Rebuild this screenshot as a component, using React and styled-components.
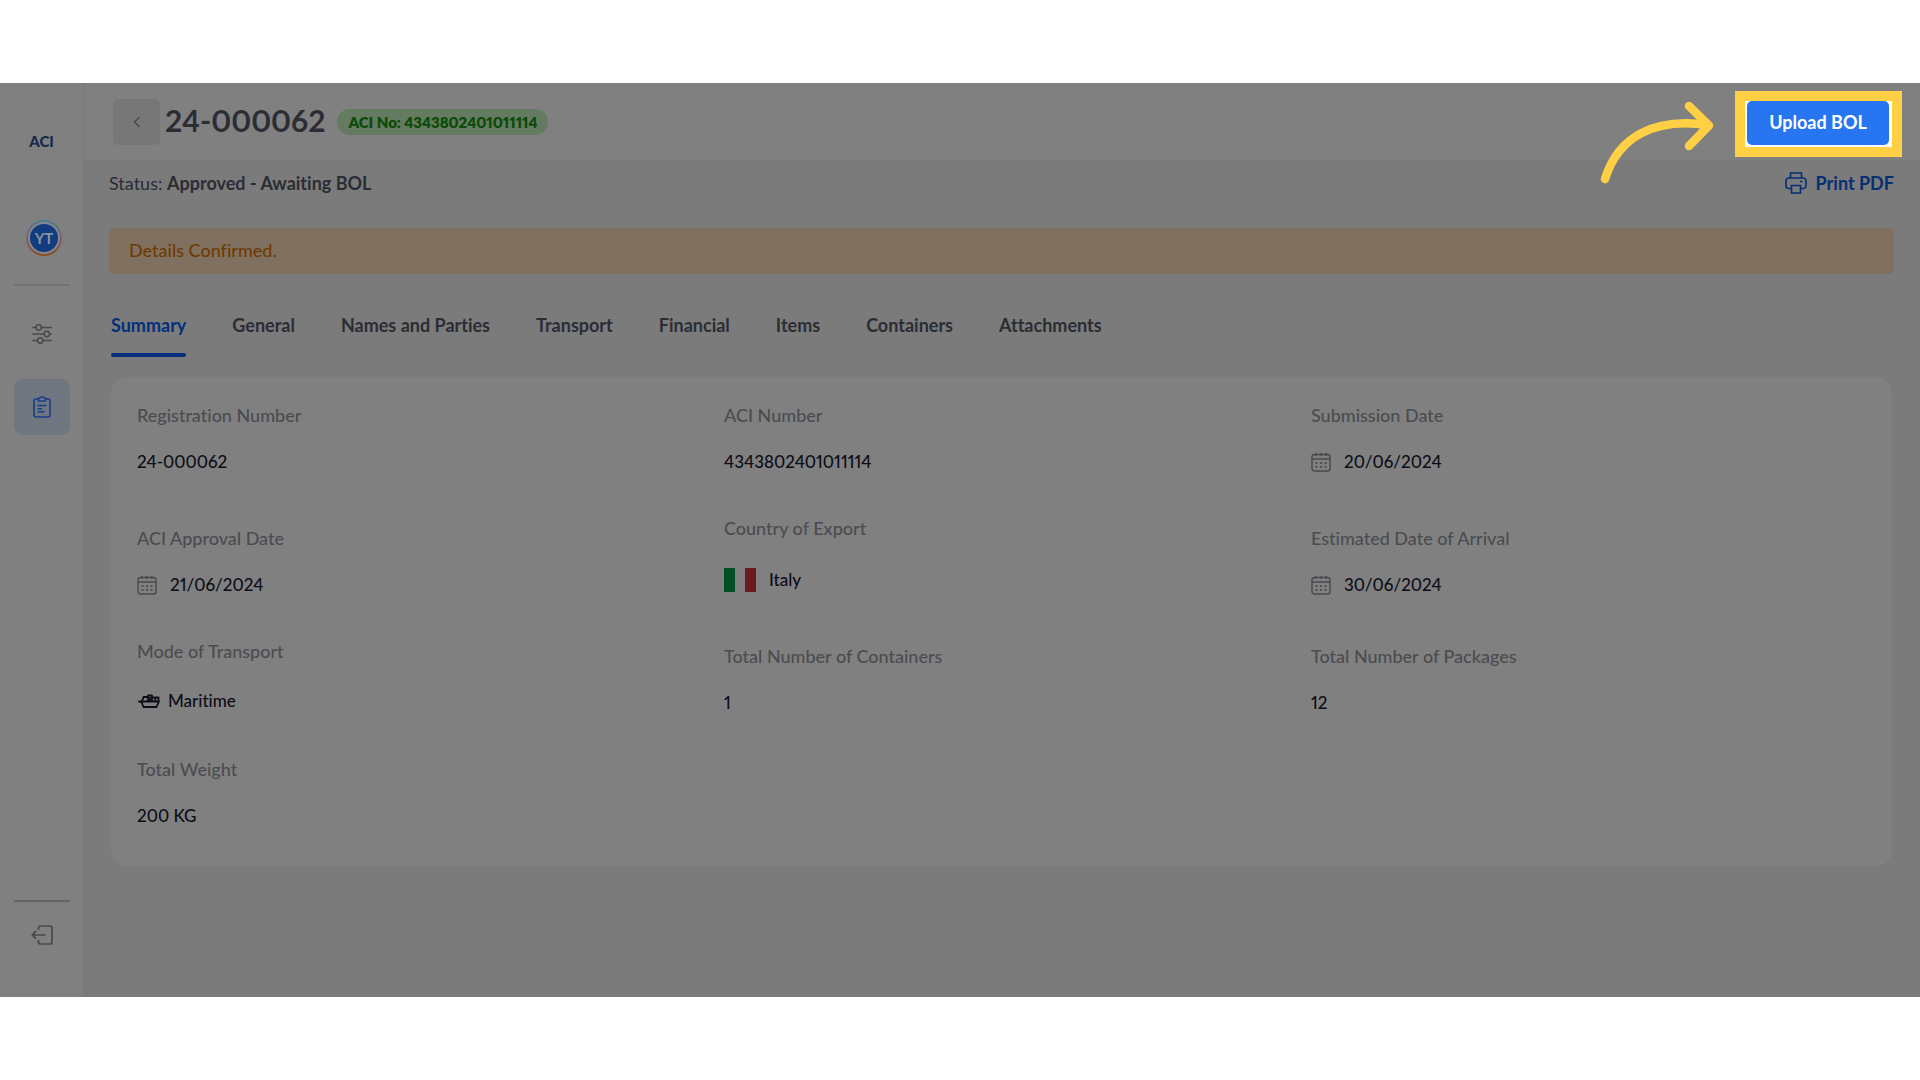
import React, { useState } from "react"
import styled, { createGlobalStyle } from "styled-components"

const GlobalStyle = createGlobalStyle`
  * {
    box-sizing: border-box;
  }

  body {
    margin: 0;
    background: #fff;
    font-family: Lato, "Open Sans", sans-serif;
    font-size: 18px;
    font-variant-ligatures: none;
    font-variant-numeric: proportional-nums;
    line-height: 24px;
    color: #2b2d35;
  }

  button {
    padding: 0;
    border: none;
    background: none;
    font: inherit;
    color: inherit;
    cursor: pointer;
  }

  svg {
    display: block;
    flex-shrink: 0;
  }
`

const Page = styled.div`
  display: flex;
  min-height: 100vh;
  padding: 83px 0;
`

const Sidebar = styled.aside`
  display: flex;
  flex-direction: column;
  align-items: center;
  flex-shrink: 0;
  width: 83px;
  padding: 46px 0;
  background: #808080;
`

const Brand = styled.a`
  font-size: 15px;
  font-weight: 900;
  color: #14294b;
  text-decoration: none;
`

const Avatar = styled.button`
  width: 36px;
  height: 36px;
  margin: 67px 0 28px 5px;
  padding: 2px;
  border-radius: 50%;
  background: linear-gradient(#4a7f90, #80606c 50%, #8a5020);
`

const Initials = styled.span`
  display: block;
  border: 2px solid #85878c;
  border-radius: 50%;
  background: #123c80;
  color: #8a919c;
  font-size: 15px;
  font-weight: 700;
  line-height: 28px;
`

const Divider = styled.hr`
  width: 56px;
  height: 2px;
  margin: 0;
  border: none;
  background: ${props => (props.$dark ? "#656565" : "#727272")};
`

const SideButton = styled.button`
  display: flex;
  align-items: center;
  justify-content: center;
  width: 56px;
  height: 56px;
  border-radius: 9px;
  color: ${props => (props.$active ? "#163f85" : "#48494d")};
  background: ${props => (props.$active ? "#6f7680" : "none")};
`

const SideLinks = styled.nav`
  display: flex;
  flex-direction: column;
  gap: 17px;
  margin: 20px 0 auto;
`

const Logout = styled(SideButton)`
  height: 24px;
  margin: 21px 0 4px;
`

const Main = styled.main`
  flex: 1;
  min-width: 0;
  background: #7b7b7b;
  border-left: 2px solid #787b80;
`

const Header = styled.header`
  display: flex;
  align-items: center;
  height: 77px;
  padding: 0 18px 0 28px;
  background: #808080;
`

const BackButton = styled.button`
  display: flex;
  align-items: center;
  justify-content: center;
  width: 47px;
  height: 46px;
  border-radius: 5px;
  background: #777;
  color: #48494d;
`

const Title = styled.h1`
  margin: 0 12px 3px 5px;
  font-size: 30px;
  font-weight: 700;
  line-height: 36px;
`

const Badge = styled.span`
  padding: 0 11px;
  border-radius: 13px;
  background: #647b62;
  color: #0d4a08;
  font-size: 15px;
  font-weight: 800;
  line-height: 26px;
`

const Highlight = styled.div`
  position: relative;
  margin: 4px 0 0 auto;
  padding: 0 3px 2px 2px;
  border: 10px solid #ffd043;
  background: #fff;
`

const Arrow = styled.svg`
  position: absolute;
  top: 0;
  right: 100%;
  margin-right: 31px;
`

const UploadButton = styled.button`
  width: 142px;
  height: 44px;
  padding-bottom: 2px;
  border-radius: 5px;
  background: #2775f1;
  color: #fff;
  font-weight: 700;
`

const Content = styled.div`
  padding: 11px 26px 0 24px;
`

const StatusRow = styled.div`
  display: flex;
  align-items: center;
  justify-content: space-between;
`

const Status = styled.p`
  margin: 0;

  strong {
    font-weight: 700;
  }
`

const PrintLink = styled.a`
  display: flex;
  align-items: center;
  gap: 9px;
  color: #062f72;
  font-weight: 700;
  text-decoration: none;
`

const Notice = styled.div`
  margin-top: 33px;
  padding: 0 20px 1px;
  border-radius: 5px;
  background: #80705f;
  color: #6f3b05;
  font-weight: 500;
  line-height: 45px;
`

const Tabs = styled.div`
  display: flex;
  gap: 46px;
  margin: 39px 2px 20px;
`

const Tab = styled.button`
  font-weight: 700;
  color: ${props => (props.$active ? "#032f7c" : "inherit")};

  &::after {
    content: "";
    display: block;
    height: 4px;
    margin-top: 16px;
    border-radius: 2px;
    background: ${props => (props.$active ? "#032f7c" : "transparent")};
  }
`

const Card = styled.dl`
  display: grid;
  grid-template-columns: repeat(3, 1fr);
  gap: 40px 32px;
  align-items: end;
  margin: 0 2px;
  padding: 26px 26px 36px;
  border-radius: 16px;
  background: #808080;
`

const Field = styled.div`
  padding-bottom: 2px;
`

const Label = styled.dt`
  color: #4b4c50;
  font-weight: 500;
`

const Value = styled.dd`
  display: flex;
  align-items: center;
  gap: ${props => (props.$kind === "ship" ? "8px" : "13px")};
  height: ${props => ({ flag: 34, ship: 29 }[props.$kind] || 24)}px;
  margin: 23px 0 0;
  color: #0c0d16;
  font-size: 17px;
  font-weight: 500;
`

const CalendarIcon = () => (
  <svg width="20" height="20" viewBox="0 0 20 20" fill="none" stroke="#48494d" strokeWidth="1.4">
    <rect x="1" y="2.5" width="18" height="16.5" rx="2.5" />
    <path d="M1 7h18M5 1v3M10 1v3M15 1v3" />
    <path d="M4.5 11.2h2M9 11.2h2M13.5 11.2h2M4.5 14.8h2M9 14.8h2M13.5 14.8h2" strokeWidth="1.7" />
  </svg>
)

const FlagIcon = () => (
  <svg width="32" height="24" viewBox="0 0 32 24">
    <path fill="#004d26" d="M0 0h11v24H0z" />
    <path fill="#808080" d="M11 0h10v24H11z" />
    <path fill="#6b191e" d="M21 0h11v24H21z" />
  </svg>
)

// cargo ship: hull with the bow to the left, containers and bridge on deck
const ShipIcon = () => (
  <svg width="23" height="16" viewBox="0 0 23 16" fill="none" stroke="#0c0d16" strokeWidth="1.8" strokeLinejoin="round">
    <path d="M2 8.500h20l-2.500 5.500H6.500L4.500 9z" />
    <path d="M5 8.500L6.500 4H11v4.500M11 5.500V2.500h4v6M15 4.500h6.500v4M18.200 4.500v4M13 4v4" />
  </svg>
)

const SlidersIcon = () => (
  <svg width="20" height="20" viewBox="0 0 20 20" fill="none" stroke="currentColor" strokeWidth="1.5" strokeLinecap="round">
    <path d="M.8 3.500h3M9.500 3.500h9.700M.8 10h11.200M17.600 10h1.600M.8 16.500H5.500M11 16.500h8.200" />
    <circle cx="6.700" cy="3.500" r="2.700" />
    <circle cx="14.800" cy="10" r="2.700" />
    <circle cx="8.200" cy="16.500" r="2.700" />
  </svg>
)

const ClipboardIcon = () => (
  <svg width="20" height="22" viewBox="0 0 20 22" fill="none" stroke="currentColor" strokeWidth="1.600" strokeLinejoin="round">
    <path d="M6.500 3H4a2 2 0 0 0-2 2v14a2 2 0 0 0 2 2h12a2 2 0 0 0 2-2V5a2 2 0 0 0-2-2h-2.500" />
    <path d="M6.500 2h1.300L9 1h2l1.200 1h1.300v3h-7zM5.500 9.500h9M5.500 12.700h4.500M5.500 15.800h7" />
  </svg>
)

const LogoutIcon = () => (
  <svg width="22" height="20" viewBox="0 0 22 20" fill="none" stroke="currentColor" strokeWidth="1.700">
    <path d="M7.500 5V3a2 2 0 0 1 2-2H19a2 2 0 0 1 2 2v14a2 2 0 0 1-2 2H9.500a2 2 0 0 1-2-2v-2" />
    <path d="M14.500 10H1.500M5 6.200L1.300 10 5 13.800" />
  </svg>
)

const PrinterIcon = () => (
  <svg width="22" height="22" viewBox="0 0 22 22" fill="none" stroke="currentColor" strokeWidth="1.600">
    <path d="M5.500 6V1h11v5M6 16.500H3.500A2.500 2.500 0 0 1 1 14V8.500A2.500 2.500 0 0 1 3.500 6h15A2.500 2.500 0 0 1 21 8.500V14a2.500 2.500 0 0 1-2.500 2.500H16M6.500 13.500h9V21h-9zM15 9.500h2.500" />
  </svg>
)

const ChevronIcon = () => (
  <svg width="8" height="12" viewBox="0 0 8 12" fill="none" stroke="currentColor" strokeWidth="1.400">
    <path d="M6.500 1l-5 5 5 5" />
  </svg>
)

const icons = {
  date: <CalendarIcon />,
  flag: <FlagIcon />,
  ship: <ShipIcon />,
}

const tabs = [
  "Summary",
  "General",
  "Names and Parties",
  "Transport",
  "Financial",
  "Items",
  "Containers",
  "Attachments",
]

const fields = [
  { label: "Registration Number", value: "24-000062" },
  { label: "ACI Number", value: "4343802401011114" },
  { label: "Submission Date", value: "20/06/2024", kind: "date" },
  { label: "ACI Approval Date", value: "21/06/2024", kind: "date" },
  { label: "Country of Export", value: "Italy", kind: "flag" },
  { label: "Estimated Date of Arrival", value: "30/06/2024", kind: "date" },
  { label: "Mode of Transport", value: "Maritime", kind: "ship" },
  { label: "Total Number of Containers", value: "1" },
  { label: "Total Number of Packages", value: "12" },
  { label: "Total Weight", value: "200 KG" },
]

const App = () => {
  const [activeTab, setActiveTab] = useState("Summary")

  return (
    <Page>
      <GlobalStyle />
      <Sidebar>
        <Brand href="#home">ACI</Brand>
        <Avatar>
          <Initials>YT</Initials>
        </Avatar>
        <Divider />
        <SideLinks>
          <SideButton aria-label="Settings">
            <SlidersIcon />
          </SideButton>
          <SideButton $active aria-label="Requests">
            <ClipboardIcon />
          </SideButton>
        </SideLinks>
        <Divider $dark />
        <Logout aria-label="Log out">
          <LogoutIcon />
        </Logout>
      </Sidebar>
      <Main>
        <Header>
          <BackButton aria-label="Back">
            <ChevronIcon />
          </BackButton>
          <Title>24-000062</Title>
          <Badge>ACI No: 4343802401011114</Badge>
          <Highlight>
            <Arrow width="114" height="84" viewBox="0 0 114 84" fill="none" stroke="#ffd043" strokeWidth="8.500" strokeLinecap="round" strokeLinejoin="round">
              <path d="M5 78C18 36 54 16 108 24M89 5l20 19.500L89 45" />
            </Arrow>
            <UploadButton>Upload BOL</UploadButton>
          </Highlight>
        </Header>
        <Content>
          <StatusRow>
            <Status>
              Status: <strong>Approved - Awaiting BOL</strong>
            </Status>
            <PrintLink href="#print">
              <PrinterIcon />
              Print PDF
            </PrintLink>
          </StatusRow>
          <Notice role="status">Details Confirmed.</Notice>
          <Tabs role="tablist">
            {tabs.map(tab => (
              <Tab
                key={tab}
                role="tab"
                aria-selected={tab === activeTab}
                $active={tab === activeTab}
                onClick={() => setActiveTab(tab)}
              >
                {tab}
              </Tab>
            ))}
          </Tabs>
          <Card>
            {fields.map(({ label, value, kind }) => (
              <Field key={label}>
                <Label>{label}</Label>
                <Value $kind={kind}>
                  {icons[kind]}
                  {value}
                </Value>
              </Field>
            ))}
          </Card>
        </Content>
      </Main>
    </Page>
  )
}

export default App
